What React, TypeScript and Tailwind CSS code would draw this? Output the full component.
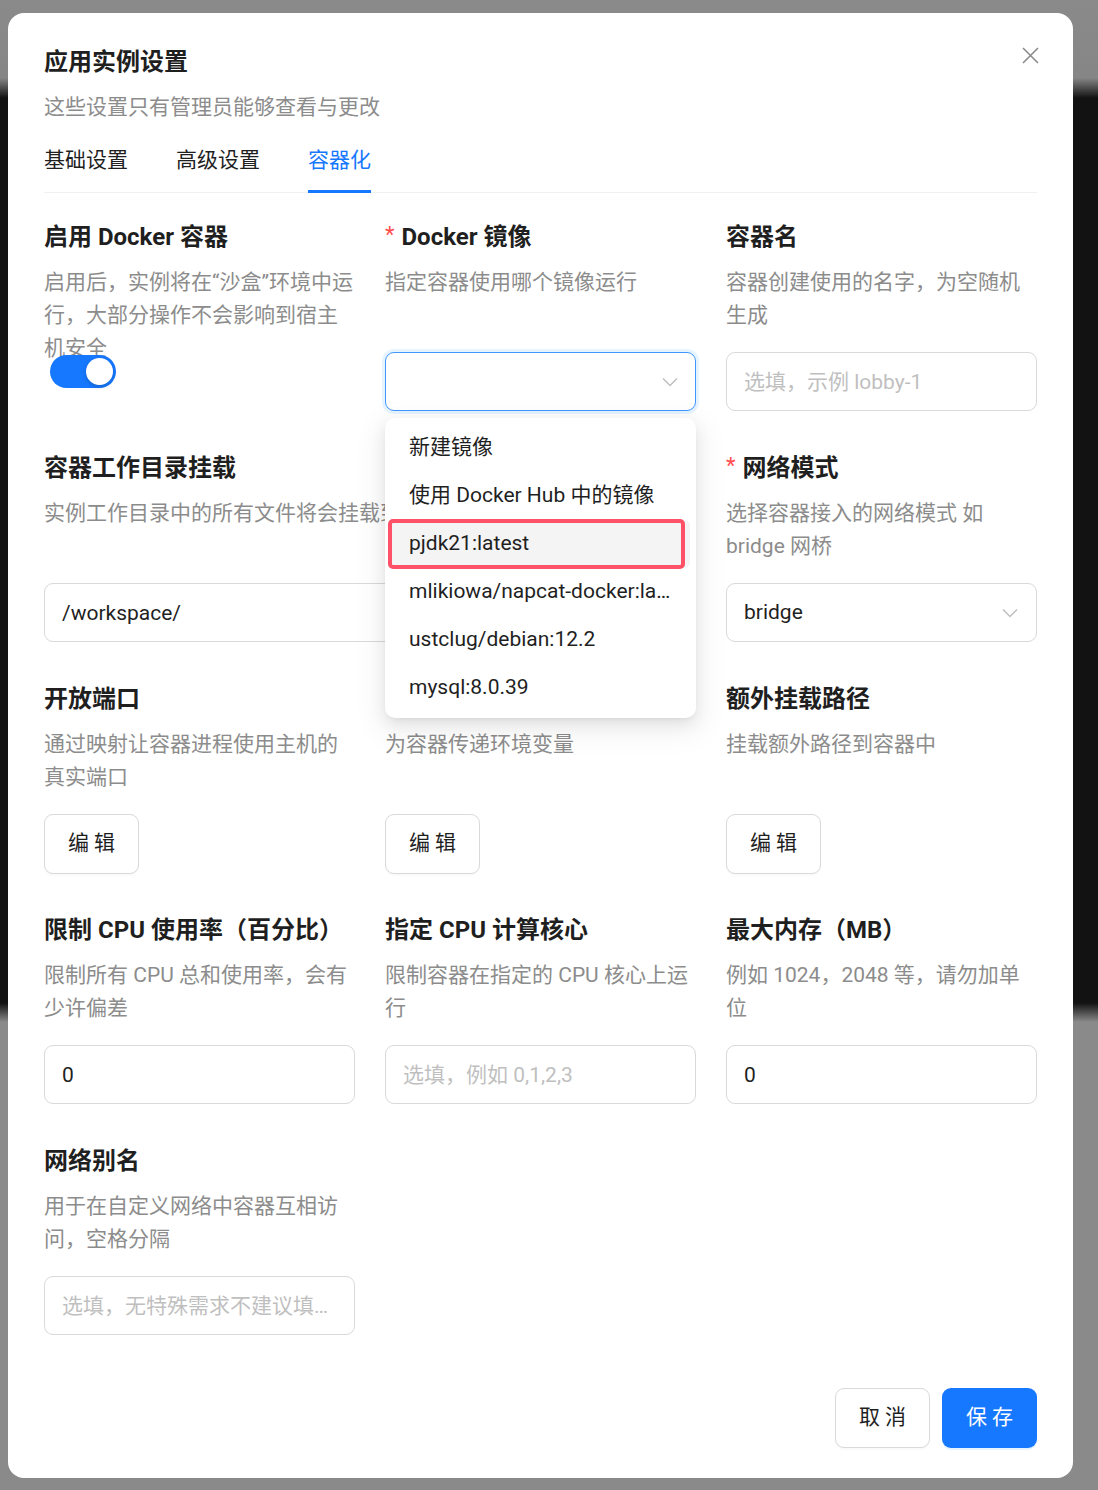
import React from "react";

const Chevron = () => (
  <svg width="16" height="10" viewBox="0 0 16 10" fill="none">
    <polyline points="1,1.5 8,8.5 15,1.5" stroke="#bfbfbf" strokeWidth="1.5" />
  </svg>
);

function Field({
  title,
  required,
  desc,
  children,
  className,
}: {
  title: string;
  required?: boolean;
  desc: string;
  children?: React.ReactNode;
  className?: string;
}) {
  return (
    <div className={className}>
      <div className="flex items-center h-[34px] text-[24px] leading-[34px] font-bold text-[#1f1f1f] whitespace-nowrap">
        {required && (
          <span className="text-[#ff4d4f] font-normal text-[22px] leading-none mr-[7px] -mt-[4px]">*</span>
        )}
        {title}
      </div>
      <div className="mt-[12px] h-[66px] text-[21px] leading-[33px] text-[#8c8c8c]">
        {desc}
      </div>
      <div className="mt-[20px]">{children}</div>
    </div>
  );
}

const TextInput = ({ value, placeholder }: { value?: string; placeholder?: string }) => (
  <input
    readOnly
    defaultValue={value}
    placeholder={placeholder}
    className="block w-full h-[59px] border border-[#d9d9d9] rounded-[9px] px-[17px] text-[21px] text-[#1f1f1f] placeholder:text-[#bfbfbf] outline-none truncate bg-white"
  />
);

const EditButton = () => (
  <div className="h-[59px]">
    <button className="block w-[95px] h-[60px] border border-[#d9d9d9] rounded-[9px] text-[21px] text-[#1f1f1f] bg-white shadow-[0_2px_0_rgba(0,0,0,0.02)]">
      编 辑
    </button>
  </div>
);

const images = [
  "新建镜像",
  "使用 Docker Hub 中的镜像",
  "pjdk21:latest",
  "mlikiowa/napcat-docker:latest",
  "ustclug/debian:12.2",
  "mysql:8.0.39",
];

export default function App() {
  return (
    <div className="min-h-[1490px] w-full pt-[13px] pl-[8px] bg-[linear-gradient(180deg,#8a8a8a_0px,#868686_78px,#121212_98px,#121212_1003px,#8a8a8a_1022px,#8a8a8a_100%)] font-['Roboto','Noto_Sans_CJK_SC',sans-serif]">
      <div className="relative w-[1065px] rounded-[16px] bg-white px-[36px] pt-[32px] pb-[30px]">
        <button className="absolute top-[34px] right-[34px] w-[17px] h-[17px]">
          <svg width="17" height="17" viewBox="0 0 17 17">
            <path d="M1 1 L16 16 M16 1 L1 16" stroke="#8c8c8c" strokeWidth="1.6" />
          </svg>
        </button>

        <div className="text-[24px] leading-[34px] font-bold text-[#1f1f1f]">应用实例设置</div>
        <div className="mt-[12px] text-[21px] leading-[33px] text-[#8c8c8c]">
          这些设置只有管理员能够查看与更改
        </div>

        <div className="mt-[20px] flex gap-[48px] border-b border-[#f0f0f0] text-[21px] leading-[33px]">
          <div className="pb-[15px] text-[#1f1f1f]">基础设置</div>
          <div className="pb-[15px] text-[#1f1f1f]">高级设置</div>
          <div className="relative pb-[15px] text-[#1677ff]">
            容器化
            <div className="absolute left-0 right-0 bottom-[-1px] h-[3px] bg-[#1677ff]" />
          </div>
        </div>

        <div className="mt-[27px] grid grid-cols-3 gap-x-[30px] gap-y-[40px]">
          <Field
            title="启用 Docker 容器"
            desc="启用后，实例将在“沙盒”环境中运行，大部分操作不会影响到宿主机安全"
          >
            <div className="pt-[3px] pl-[6px]">
              <div className="relative w-[66px] h-[33px] rounded-full bg-[#1677ff] flex items-center justify-end pr-[3px]">
                <div className="w-[27px] h-[27px] rounded-full bg-white shadow-[0_2px_4px_rgba(0,35,11,0.2)]" />
              </div>
            </div>
          </Field>

          <Field title="Docker 镜像" required desc="指定容器使用哪个镜像运行">
            <div className="relative">
              <div className="h-[59px] border border-[#4096ff] rounded-[9px] shadow-[0_0_0_3px_rgba(5,145,255,0.1)] flex items-center justify-end pr-[17px] bg-white">
                <Chevron />
              </div>
              <div className="absolute z-20 left-0 top-[66px] w-full rounded-[10px] bg-white p-[6px] shadow-[0_6px_16px_0_rgba(0,0,0,0.08),0_3px_6px_-4px_rgba(0,0,0,0.12),0_9px_28px_8px_rgba(0,0,0,0.05)]">
                {images.map((img, i) => (
                  <div
                    key={i}
                    className={
                      "relative h-[48px] px-[18px] flex items-center text-[21px] text-[#1f1f1f] rounded-[6px] " +
                      (i === 2 ? "bg-[#f4f4f4]" : "")
                    }
                  >
                    <span className="truncate">{img}</span>
                    {i === 2 && (
                      <div className="absolute left-[-3px] right-[5px] top-[-1px] bottom-[-1px] border-[4px] border-[#ff5268] rounded-[5px]" />
                    )}
                  </div>
                ))}
              </div>
            </div>
          </Field>

          <Field title="容器名" desc="容器创建使用的名字，为空随机生成">
            <TextInput placeholder="选填，示例 lobby-1" />
          </Field>

          <Field
            className="col-span-2"
            title="容器工作目录挂载"
            desc="实例工作目录中的所有文件将会挂载到容器中"
          >
            <TextInput value="/workspace/" />
          </Field>

          <Field title="网络模式" required desc="选择容器接入的网络模式 如 bridge 网桥">
            <div className="h-[59px] border border-[#d9d9d9] rounded-[9px] flex items-center justify-between pl-[17px] pr-[18px] text-[21px] text-[#1f1f1f]">
              <span>bridge</span>
              <Chevron />
            </div>
          </Field>

          <Field title="开放端口" desc="通过映射让容器进程使用主机的真实端口">
            <EditButton />
          </Field>
          <Field title="环境变量" desc="为容器传递环境变量">
            <EditButton />
          </Field>
          <Field title="额外挂载路径" desc="挂载额外路径到容器中">
            <EditButton />
          </Field>

          <Field title="限制 CPU 使用率（百分比）" desc="限制所有 CPU 总和使用率，会有少许偏差">
            <TextInput value="0" />
          </Field>
          <Field title="指定 CPU 计算核心" desc="限制容器在指定的 CPU 核心上运行">
            <TextInput placeholder="选填，例如 0,1,2,3" />
          </Field>
          <Field title="最大内存（MB）" desc="例如 1024，2048 等，请勿加单位">
            <TextInput value="0" />
          </Field>

          <Field title="网络别名" desc="用于在自定义网络中容器互相访问，空格分隔">
            <TextInput placeholder="选填，无特殊需求不建议填写此项" />
          </Field>
        </div>

        <div className="mt-[53px] flex justify-end gap-[12px]">
          <button className="w-[95px] h-[60px] border border-[#d9d9d9] rounded-[9px] text-[21px] text-[#1f1f1f] bg-white shadow-[0_2px_0_rgba(0,0,0,0.02)]">
            取 消
          </button>
          <button className="w-[95px] h-[60px] rounded-[9px] text-[21px] text-white bg-[#1677ff] shadow-[0_2px_0_rgba(5,145,255,0.1)]">
            保 存
          </button>
        </div>
      </div>
    </div>
  );
}
